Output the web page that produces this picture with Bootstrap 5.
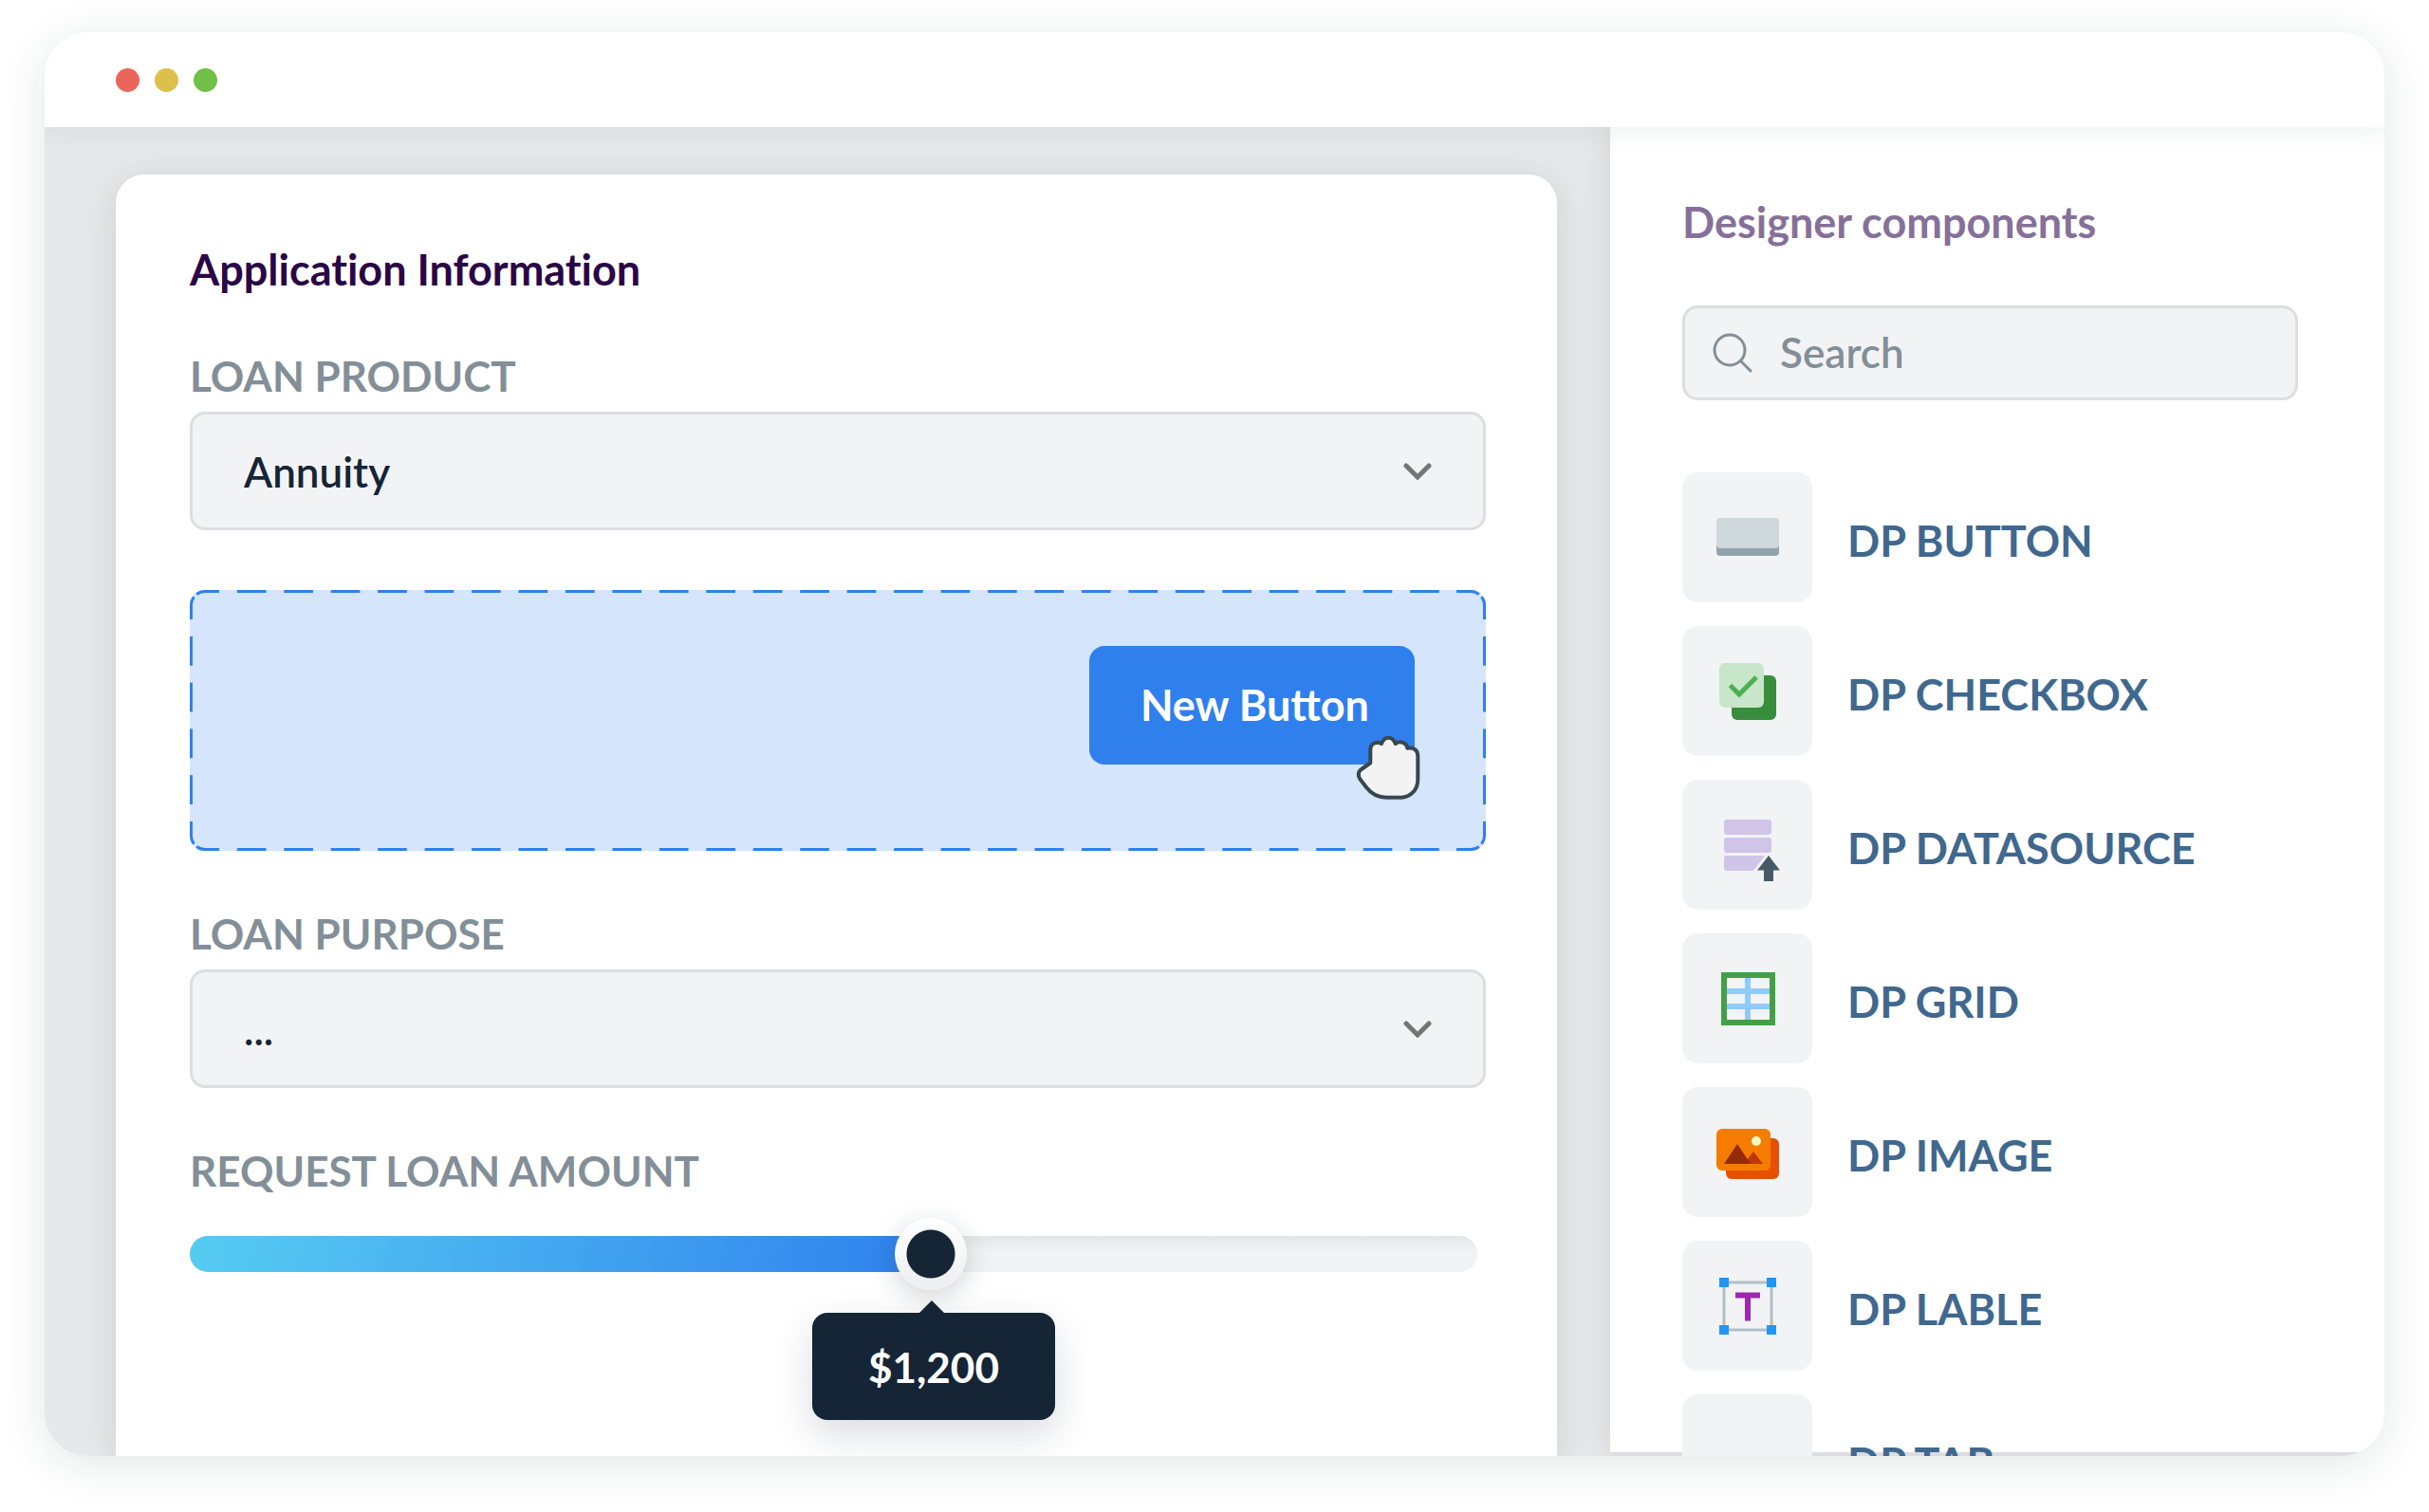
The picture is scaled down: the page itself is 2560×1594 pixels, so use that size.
<!DOCTYPE html>
<html lang="en">
<head>
<meta charset="utf-8">
<meta name="viewport" content="width=device-width, initial-scale=1">
<title>Application Information</title>
<link rel="stylesheet" href="https://cdn.jsdelivr.net/npm/bootstrap@5.3.0/dist/css/bootstrap.min.css">
<style>
:root{--ink:#152536;--field:#f2f3f5;--line:#dcdee1;--blue:#2f80ed;--muted:#838f98}
body{font-family:Lato,"Open Sans",sans-serif;font-size:44px;line-height:54px;font-weight:700;font-variant-ligatures:no-common-ligatures;color:var(--ink);background:#fff;padding:34px 47px 59px}
.window{height:calc(100vh - 93px);border-radius:46px;box-shadow:0 8px 48px rgba(24,48,48,.12)}
.titlebar{height:100px;padding-left:75px;gap:16px;z-index:3;box-shadow:0 6px 24px rgba(40,50,70,.07)}
.dot{width:25px;height:25px}
.workspace{background:#e7e8ea;padding:50px 56px 0 75px;min-width:0}
.form-card{background:#fff;border-radius:30px 30px 0 0;padding:73px 75px 0 78px;box-shadow:0 6px 36px rgba(40,46,58,.13)}
.title{font-size:45px;line-height:54px;font-weight:700}
.form-card .title{color:#2b0646;margin-bottom:58px}
.field-label{color:var(--muted);line-height:54px;margin-bottom:11px}
.field-box{height:125px;font-size:44px;font-weight:600;color:var(--ink);padding:0 54px;border:3px solid var(--line);border-radius:16px;background-color:var(--field);background-image:url("data:image/svg+xml,%3Csvg xmlns='http://www.w3.org/2000/svg' viewBox='0 0 30 18'%3E%3Cpath d='M3 3l12 12L27 3' fill='none' stroke='%23757575' stroke-width='5' stroke-linecap='round'/%3E%3C/svg%3E");background-size:30px 18px;background-position:right 54px center}
.dropzone{height:275px;margin:63px 0 60px;padding:59px 75px 0;border-radius:16px;background:#d5e5fb}
.dropzone::before,.dropzone::after{content:"";position:absolute;pointer-events:none}
.dropzone::before{inset:0 49px 0 31px;background:linear-gradient(90deg,transparent 37%,var(--blue) 37%) left top/49px 3px,linear-gradient(90deg,transparent 37%,var(--blue) 37%) left bottom/49px 3px;background-repeat:round no-repeat}
.dropzone::after{inset:31px 0 49px;background:linear-gradient(transparent 37%,var(--blue) 37%) left top/3px 49px,linear-gradient(transparent 37%,var(--blue) 37%) right top/3px 49px;background-repeat:no-repeat round}
.corners{inset:0;width:100%;height:100%;fill:none;stroke:var(--blue);stroke-width:3}
.new-btn{height:125px;padding:0 48px 0 54px;border:0;border-radius:16px;background:var(--blue);color:#fff;font-size:45px;font-weight:700}
.grab{right:-6px;bottom:-37px;width:68px;height:68px}
.amount-label{margin:60px 0 23px}
.range-wrap{padding-right:9px}
.slider{display:block;width:100%;height:76px;padding:0}
.slider::-webkit-slider-runnable-track{height:38px;border-radius:19px;box-shadow:none;background:linear-gradient(100deg,#56ccf2,var(--blue)) left/var(--fill) 100% no-repeat,linear-gradient(#e4e5e8,var(--field) 45%)}
.slider::-webkit-slider-thumb{width:76px;height:76px;margin-top:-19px;border:0;border-radius:50%;background:radial-gradient(circle,var(--ink) 25px,transparent 26px),linear-gradient(#fff,#edeef1);box-shadow:0 8px 30px rgba(21,37,54,.2)}
.slider-tip{top:100px;left:calc(41px + (100% - 85px) * .58);transform:translateX(-50%);width:256px;height:113px;border-radius:16px;background:var(--ink);color:#fff;box-shadow:0 16px 40px rgba(21,37,54,.16)}
.slider-tip::before{content:"";position:absolute;bottom:100%;left:50%;margin-left:-15px;border:13px solid transparent;border-top:0;border-bottom-color:var(--ink)}
.components{width:816px;padding:73px 91px 0 76px;z-index:2;background:linear-gradient(#dcdde2,#dcdde2) bottom/100% 4px no-repeat #fff;box-shadow:0 0 30px rgba(40,46,58,.12)}
.components .title{color:#86709a;margin-bottom:61px}
.search-box{height:100px;margin-bottom:76px;padding:0 29px;gap:29px;border:3px solid var(--line);border-radius:16px;background:var(--field)}
.search-box input{min-width:0;border:0;padding:0 0 3px;background:none;outline:0;color:var(--ink);font-weight:600}
.search-box input::placeholder{color:var(--muted);opacity:1}
.palette{gap:25px;color:#40688f;font-size:45px}
.palette li{gap:37px}
.palette span{padding-top:6px}
.tile{width:137px;height:137px;border-radius:16px;background:#f2f3f5}
</style>
<script src="https://cdn.jsdelivr.net/npm/bootstrap@5.3.0/dist/js/bootstrap.bundle.min.js"></script>
</head>
<body>
<div class="window d-flex flex-column overflow-hidden bg-white">
  <header class="titlebar d-flex align-items-center flex-shrink-0 bg-white position-relative">
    <span class="dot rounded-circle" style="background:#ec655a"></span>
    <span class="dot rounded-circle" style="background:#dfbf4b"></span>
    <span class="dot rounded-circle" style="background:#70bf47"></span>
  </header>
  <div class="d-flex flex-fill overflow-hidden">
    <main class="workspace d-flex flex-column flex-fill overflow-hidden">
      <form class="form-card flex-fill">
        <h1 class="title">Application Information</h1>
        <label class="field-label d-block" for="product">LOAN PRODUCT</label>
        <select class="form-select field-box" id="product"><option>Annuity</option></select>
        <div class="dropzone position-relative d-flex justify-content-end align-items-start">
          <svg class="corners position-absolute" aria-hidden="true">
            <svg overflow="visible"><path id="corner" d="M1.5 31V16A14 14 0 0 1 4.5 7.2M7.2 4.5A14 14 0 0 1 16 1.5H31"/></svg>
            <svg x="100%" overflow="visible"><use href="#corner" transform="scale(-1 1)"/></svg>
            <svg y="100%" overflow="visible"><use href="#corner" transform="scale(1 -1)"/></svg>
            <svg x="100%" y="100%" overflow="visible"><use href="#corner" transform="scale(-1 -1)"/></svg>
          </svg>
          <div class="position-relative">
            <button class="btn new-btn" type="button">New Button</button>
            <svg class="grab position-absolute" viewBox="0 0 68 68" aria-hidden="true"><path d="M15.3 29.3V15.500C15.300 8.500 22 6 27 9C30 0.600 38.600 0.600 41.700 9C47 5.500 53.500 8 54.300 13.700C61 12.500 65.300 16 65.300 22V47C65.300 58 57 65.700 48 65.700H32C23 65.700 16 61.500 11 55L4.500 46.500C1.500 42.500 2.500 38 6.500 35.500Z" fill="#f3f3f3" stroke="#37474f" stroke-width="4" stroke-linejoin="round"/></svg>
          </div>
        </div>
        <label class="field-label d-block" for="purpose">LOAN PURPOSE</label>
        <select class="form-select field-box" id="purpose"><option>...</option></select>
        <label class="field-label amount-label d-block" for="amount">REQUEST LOAN AMOUNT</label>
        <div class="range-wrap position-relative">
          <input class="form-range slider" type="range" id="amount" min="0" max="2070" step="10" value="1200" style="--fill:58%">
          <output class="slider-tip position-absolute d-flex align-items-center justify-content-center" for="amount">$1,200</output>
        </div>
      </form>
    </main>
    <aside class="components flex-shrink-0 overflow-hidden position-relative">
      <h2 class="title">Designer components</h2>
      <label class="search-box d-flex align-items-center">
        <svg class="flex-shrink-0" width="42" height="42" viewBox="0 0 42 42" fill="none" stroke="#838f98" stroke-width="3" stroke-linecap="round" aria-hidden="true"><circle cx="18" cy="18" r="16"/><path d="M29.500 29.500L40 40"/></svg>
        <input class="flex-fill" type="search" placeholder="Search" aria-label="Search">
      </label>
      <ul class="palette list-unstyled d-flex flex-column mb-0">
        <li class="d-flex align-items-center"><svg class="tile flex-shrink-0" viewBox="0 0 137 137"><rect x="36" y="60" width="66" height="28" rx="4" fill="#90a4ae"/><rect x="36" y="48" width="66" height="32" rx="4" fill="#cfd8dc"/></svg><span>DP BUTTON</span></li>
        <li class="d-flex align-items-center"><svg class="tile flex-shrink-0" viewBox="0 0 137 137"><rect x="52" y="52" width="47" height="47" rx="6" fill="#388e3c"/><rect x="39" y="39" width="47" height="47" rx="6" fill="#c8e6c9"/><path d="M50.500 62.500L60 72L78 54" fill="none" stroke="#4caf50" stroke-width="5"/></svg><span>DP CHECKBOX</span></li>
        <li class="d-flex align-items-center"><svg class="tile flex-shrink-0" viewBox="0 0 137 137"><g fill="#d1c4e9"><rect x="44" y="42" width="50" height="16" rx="3"/><rect x="44" y="61" width="50" height="16" rx="3"/><path d="M47 80H87L75 96H47A3 3 0 0 1 44 93V83A3 3 0 0 1 47 80Z"/></g><path d="M91 80L103 95.500H96V107H86V95.500H79Z" fill="#455a64"/></svg><span>DP DATASOURCE</span></li>
        <li class="d-flex align-items-center"><svg class="tile flex-shrink-0" viewBox="0 0 137 137"><path d="M44 61H95M44 77H95M69 44V95" fill="none" stroke="#90caf9" stroke-width="6"/><rect x="44" y="44" width="51" height="50" fill="none" stroke="#43a047" stroke-width="6"/></svg><span>DP GRID</span></li>
        <li class="d-flex align-items-center"><svg class="tile flex-shrink-0" viewBox="0 0 137 137"><rect x="46" y="54" width="56" height="43" rx="6" fill="#e65100"/><rect x="36" y="44" width="57" height="44" rx="6" fill="#f57c00"/><circle cx="78" cy="57" r="5" fill="#fff9c4"/><path d="M75 68L85 81H65Z" fill="#bf360c"/><path d="M58 60L72 81H44Z" fill="#942a09"/></svg><span>DP IMAGE</span></li>
        <li class="d-flex align-items-center"><svg class="tile flex-shrink-0" viewBox="0 0 137 137"><rect x="44" y="44" width="50" height="50" fill="none" stroke="#b0bec5" stroke-width="3"/><path d="M39 39h10v10h-10zM89 39h10v10h-10zM39 89h10v10h-10zM89 89h10v10h-10z" fill="#2196f3"/><path d="M56 57.500H82M69 55V84.500" fill="none" stroke="#9c27b0" stroke-width="6"/></svg><span>DP LABLE</span></li>
        <li class="d-flex align-items-center"><svg class="tile flex-shrink-0" viewBox="0 0 137 137"></svg><span>DP TAB</span></li>
      </ul>
    </aside>
  </div>
</div>
</body>
</html>
